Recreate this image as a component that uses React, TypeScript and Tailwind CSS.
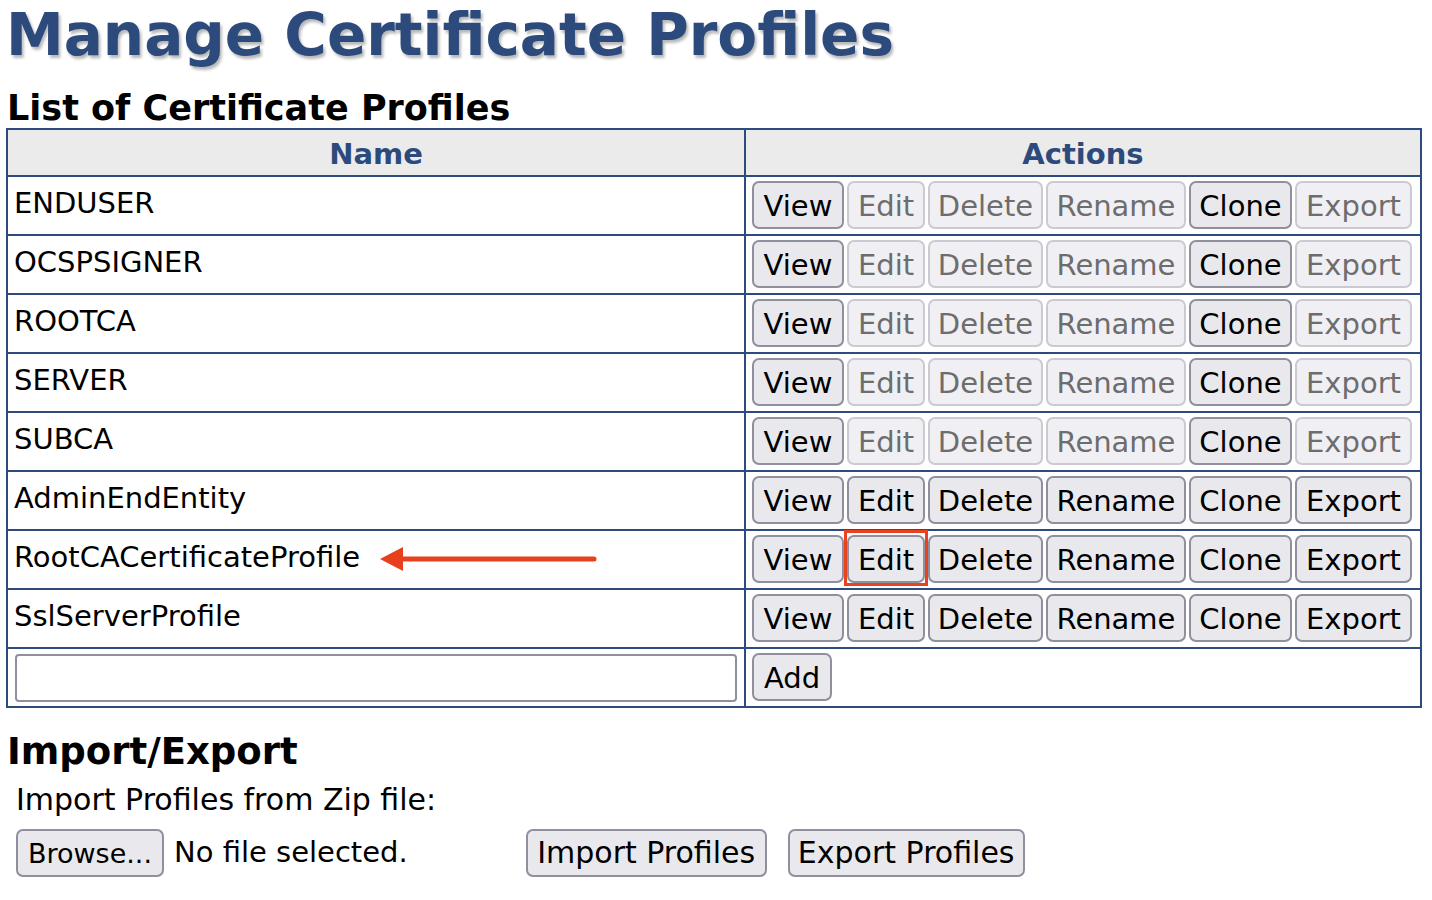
import React from "react";

const profiles = [
  { name: "ENDUSER", fixed: true },
  { name: "OCSPSIGNER", fixed: true },
  { name: "ROOTCA", fixed: true },
  { name: "SERVER", fixed: true },
  { name: "SUBCA", fixed: true },
  { name: "AdminEndEntity", fixed: false },
  { name: "RootCACertificateProfile", fixed: false, marked: true },
  { name: "SslServerProfile", fixed: false },
];

const actions = [
  { label: "View", w: "w-[92px]", always: true },
  { label: "Edit", w: "w-[78px]", always: false },
  { label: "Delete", w: "w-[115px]", always: false },
  { label: "Rename", w: "w-[140px]", always: false },
  { label: "Clone", w: "w-[103px]", always: true },
  { label: "Export", w: "w-[117px]", always: false },
];

function Btn({
  label,
  w,
  disabled,
  size = "text-[29px] pt-[3px]",
}: {
  label: string;
  w: string;
  disabled?: boolean;
  size?: string;
}) {
  return (
    <button
      disabled={disabled}
      className={`h-[48px] ${w} ${size} shrink-0 rounded-[7px] border-2 leading-none ${
        disabled
          ? "border-[#cacad0] bg-[#f0f0f4] text-[#6d6d6d]"
          : "border-[#8f8f9d] bg-[#e9e9ed] text-black"
      }`}
    >
      {label}
    </button>
  );
}

export default function App() {
  return (
    <div className="min-h-[900px] bg-white font-['DejaVu_Sans',Verdana,sans-serif] text-black">
      {/* Page title */}
      <h1 className="pl-[6px] pt-[6px] text-[58px] font-bold leading-[58px] text-[#2c4a7c] [text-shadow:2px_3px_3px_#b8b8b8]">
        Manage Certificate Profiles
      </h1>

      <h2 className="mt-[27px] pl-[7px] text-[35px] font-bold leading-[35px]">List of Certificate Profiles</h2>

      {/* Profiles table */}
      <div className="ml-[6px] mt-[2px] w-[1416px] border-2 border-[#2e4b80]">
        <div className="grid h-[45px] grid-cols-[738px_1fr] bg-[#ebebeb] text-[29px] font-bold text-[#2c4a7c]">
          <div className="flex items-center justify-center border-r-2 border-[#2e4b80] pt-[3px]">Name</div>
          <div className="flex items-center justify-center pt-[3px]">Actions</div>
        </div>

        {profiles.map((p) => (
          <div key={p.name} className="grid h-[59px] grid-cols-[738px_1fr] border-t-2 border-[#2e4b80]">
            <div className="relative border-r-2 border-[#2e4b80] pl-[6px] pt-[9px] text-[29px] leading-[34px]">
              {p.name}
              {p.marked && (
                <svg className="absolute left-[372px] top-[14px]" width="220" height="28" viewBox="0 0 220 28">
                  <line x1="20" y1="14" x2="214" y2="14" stroke="#e8401c" strokeWidth="5" strokeLinecap="round" />
                  <polygon points="0,14 23,2 23,26" fill="#e8401c" />
                </svg>
              )}
            </div>
            <div className="flex gap-[3px] pl-[6px] pt-[4px]">
              {actions.map((a) => (
                <div key={a.label} className="relative">
                  <Btn label={a.label} w={a.w} disabled={p.fixed && !a.always} />
                  {p.marked && a.label === "Edit" && (
                    <div className="pointer-events-none absolute left-[-3px] top-[-5px] h-[56px] w-[84px] border-[3px] border-[#e8431f]" />
                  )}
                </div>
              ))}
            </div>
          </div>
        ))}

        <div className="grid h-[59px] grid-cols-[738px_1fr] border-t-2 border-[#2e4b80]">
          <div className="border-r-2 border-[#2e4b80] pl-[7px] pt-[5px]">
            <input type="text" className="h-[48px] w-[722px] rounded-[4px] border-2 border-[#8f8f9d] bg-white" />
          </div>
          <div className="pl-[6px] pt-[4px]">
            <Btn label="Add" w="w-[80px]" />
          </div>
        </div>
      </div>

      {/* Import / export */}
      <h2 className="mt-[25px] pl-[7px] text-[37px] font-bold leading-[37px]">Import/Export</h2>
      <div className="mt-[12px] pl-[16px] text-[30px] leading-[35px]">Import Profiles from Zip file:</div>
      <div className="mt-[12px] flex items-center pl-[16px]">
        <Btn label="Browse..." w="w-[148px]" size="text-[27px] pt-[1px]" />
        <span className="ml-[10px] text-[29px]">No file selected.</span>
        <div className="ml-[118px] flex gap-[21px]">
          <Btn label="Import Profiles" w="w-[241px]" size="text-[30px]" />
          <Btn label="Export Profiles" w="w-[237px]" size="text-[30px]" />
        </div>
      </div>
    </div>
  );
}
